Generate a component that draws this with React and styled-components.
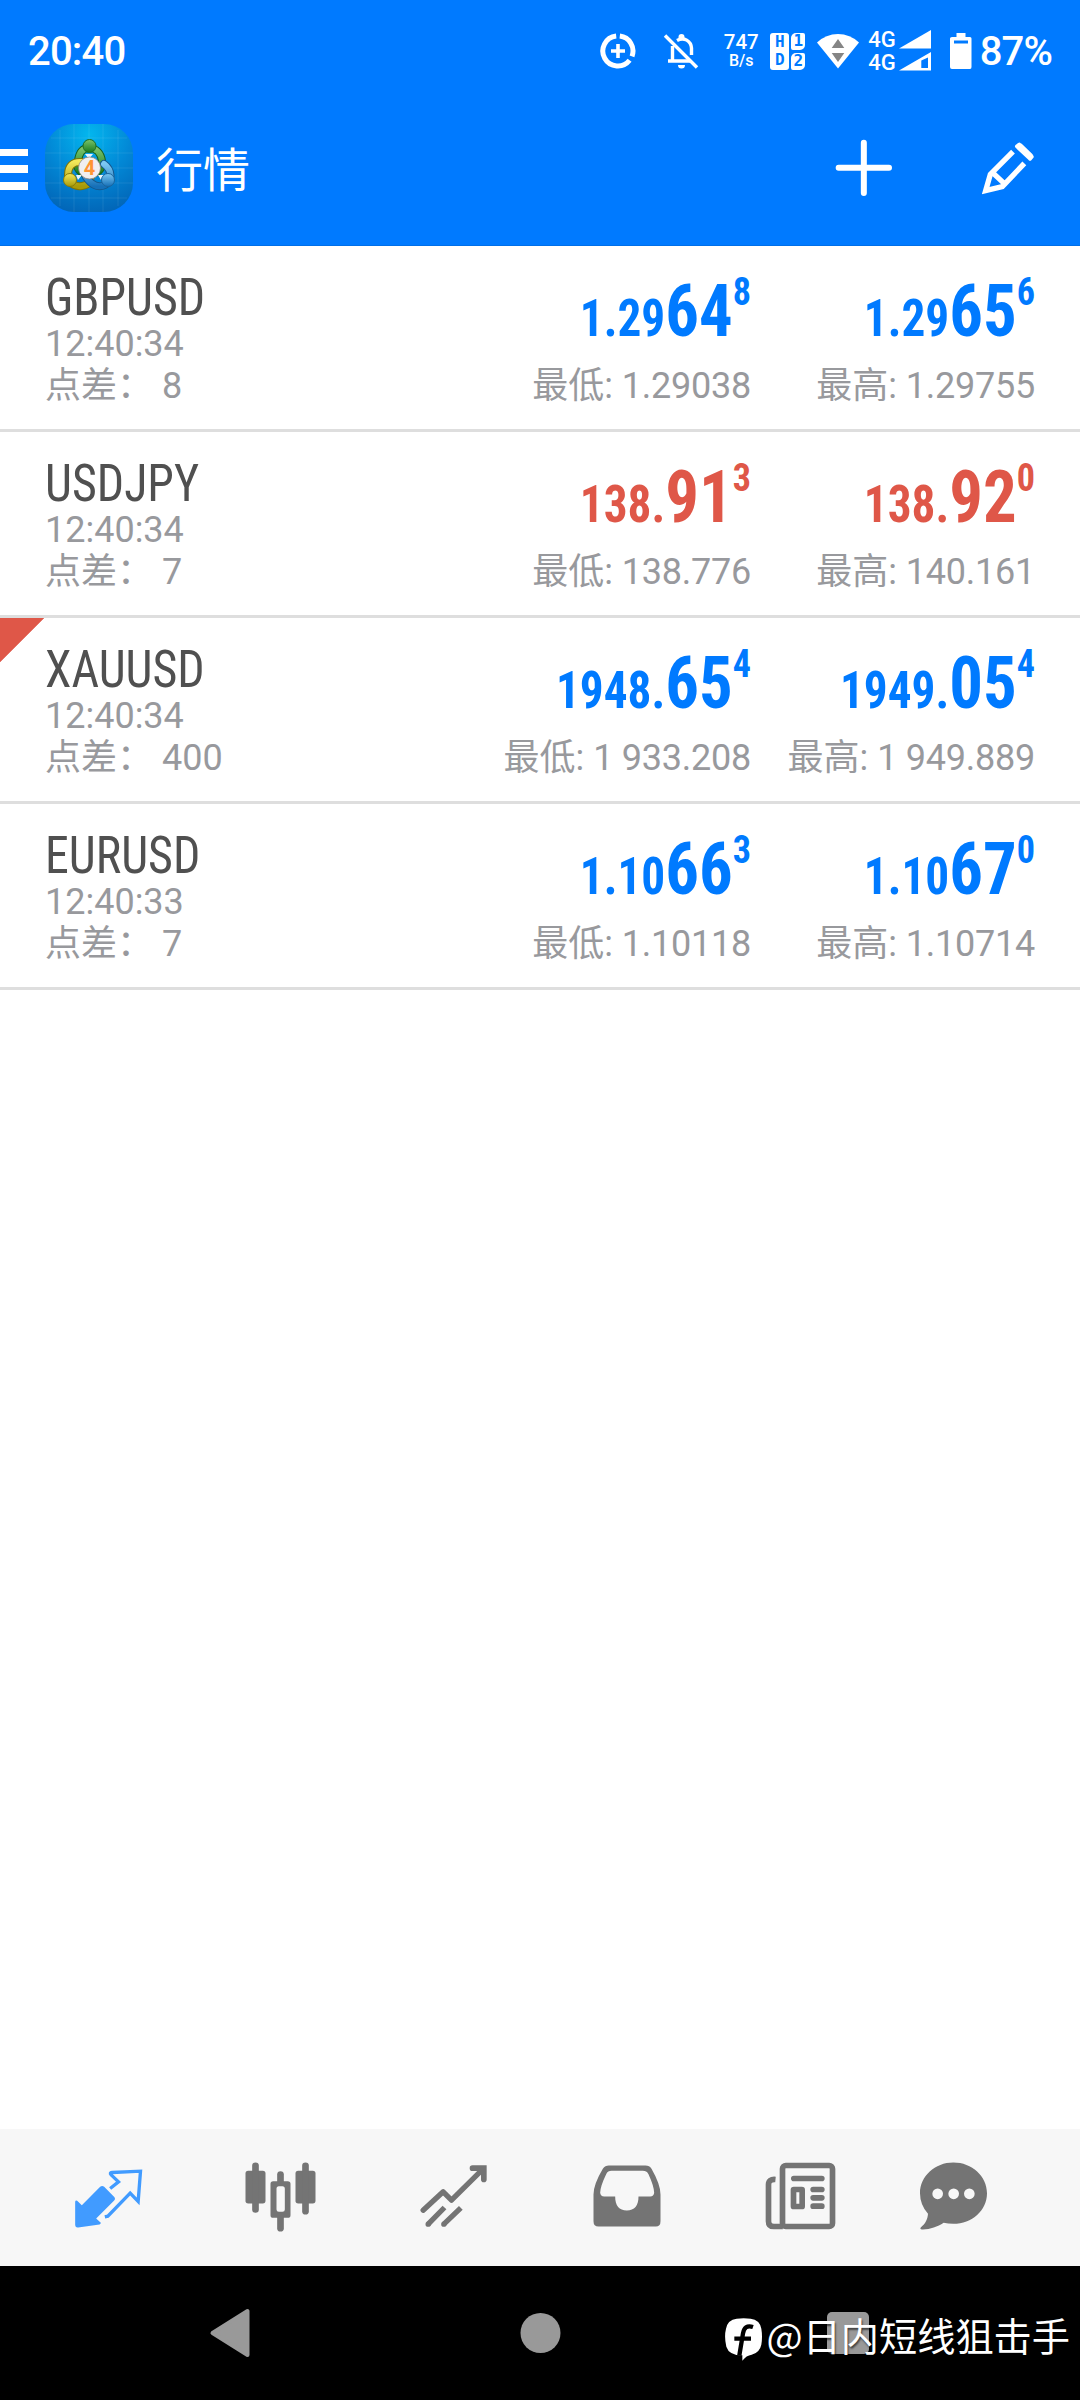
import React from 'react';
import styled, { createGlobalStyle } from 'styled-components'

const GlobalStyle = createGlobalStyle`
    * {
        box-sizing: border-box;
    }

    body {
        margin: 0;
        background: #fff;
        font-family: Roboto, "Noto Sans CJK SC", sans-serif;
    }
`

const BLUE = '#007aff'
const RED = '#df5748'

const Screen = styled.div`
    width: 1080px;
    height: 2400px;
    display: flex;
    flex-direction: column;
    position: relative;
    overflow: hidden;
    background: #fff;
`

/* status bar */

const StatusBar = styled.div`
    height: 100px;
    padding: 2px 28px 0 28px;
    display: flex;
    align-items: center;
    color: #fff;
    background: ${BLUE};
    font-weight: 500;
    white-space: nowrap;

    svg {
        display: block;
        flex: none;
    }
`

const Clock = styled.span`
    margin-right: auto;
    padding-top: 2px;
    font-size: 40px;
    line-height: 48px;
    letter-spacing: -.8px;
`

const NetSpeed = styled.div`
    width: 36px;
    margin: 0 11px 0 24px;
    display: flex;
    flex-direction: column;
    align-items: center;
    font-size: 20.5px;
    line-height: 18px;

    small {
        font-size: 16px;
        line-height: 19px;
    }
`

const VolteBadge = styled.div`
    width: 35px;
    height: 37px;
    margin-right: 12px;
    display: grid;
    grid-template-columns: 19px 14px;
    grid-template-rows: 17px 17px;
    gap: 3px 2px;
`

const VolteTile = styled.span`
    display: flex;
    align-items: center;
    justify-content: center;
    grid-row: ${props => props.$tall ? 'span 2' : 'auto'};
    flex-direction: column;
    border-radius: ${props => props.$tall ? '3px' : '5px 2px 5px 2px'};
    background: #fff;
    color: ${BLUE};
    font: bold 16px/18px "DejaVu Sans Mono", monospace;
`

const NetType = styled.div`
    display: flex;
    flex-direction: column;
    margin: 0 3px 0 9px;
    font-size: 22px;
    line-height: 23px;
`

const Battery = styled.span`
    margin-left: 8px;
    padding-top: 2px;
    font-size: 40px;
    line-height: 48px;
    letter-spacing: -.9px;
`

/* app bar */

const AppBar = styled.header`
    height: 146px;
    padding: 0 43px 9px 0;
    display: flex;
    align-items: center;
    background: ${BLUE};
    border-bottom: 1px solid #006fe8;
`

const MenuButton = styled.div`
    width: 28px;
    height: 41px;
    margin: 2px 17px 0 0;
    display: flex;
    flex-direction: column;
    justify-content: space-between;

    i {
        height: 7.5px;
        background: #fff;
    }
`

const Title = styled.h1`
    margin: 0 auto 0 23px;
    padding-top: 5px;
    color: #fff;
    font-size: 47px;
    font-weight: 400;
    line-height: 60px;
`

const Action = styled.svg`
    width: 58px;
    height: 58px;
    display: block;

    & + & {
        margin-left: 86px;
    }
`

/* quotes */

const List = styled.main`
    flex: 1;
`

const Row = styled.section`
    height: 186px;
    padding: 27px 45px 0;
    display: grid;
    grid-template-columns: 1fr 284px 284px;
    border-bottom: 3px solid #dedede;
    background: ${props => props.$flagged ? `linear-gradient(135deg, ${RED} 31px, transparent 31.5px)` : 'none'};
`

const Symbol = styled.div`
    color: #505050;
    font-size: 51px;
    font-weight: 450;
    line-height: 50px;
    font-family: "Roboto Condensed", Roboto, sans-serif;
    font-stretch: 75%;
    transform: scaleX(.94);
    transform-origin: left;
`

const Info = styled.div`
    color: #98999d;
    font-size: 36px;
    line-height: 42px;
    white-space: pre;
`

const Quote = styled.div`
    text-align: right;
    white-space: nowrap;
`

const Value = styled.span`
    letter-spacing: -.25px;
`

const Price = styled.div`
    height: 92px;
    color: ${props => props.$down ? RED : BLUE};
    font-family: "Roboto Condensed", Roboto, sans-serif;
    font-stretch: 75%;
    font-weight: 730;
    font-size: 72px;
    line-height: 77px;
    transform: scaleX(.927);
    transform-origin: right;
`

const Small = styled.span`
    font-size: 51px;
    line-height: 0;
`

const Pip = styled.span`
    font-size: 39px;
    line-height: 0;
    vertical-align: 31px;
`

/* bottom */

const TabBar = styled.nav`
    height: 137px;
    padding-left: 22.5px;
    display: grid;
    grid-template-columns: repeat(5, 173px) 132px;
    align-items: center;
    justify-items: center;
    background: #f7f7f7;
`

const TabIcon = styled.svg`
    width: 74px;
    height: 74px;
    color: ${props => props.$active ? '#419bff' : '#747474'};
`

const SystemNav = styled.footer`
    height: 134px;
    padding: 0 211px 1px 209px;
    display: flex;
    align-items: center;
    justify-content: space-between;
    background: #000;
`

// signature that floats over the navigation buttons
const Signature = styled.div`
    position: absolute;
    right: 10px;
    bottom: 35px;
    display: flex;
    align-items: center;
    color: #fff;
    font: 400 38.2px/60px "Noto Sans CJK SC", sans-serif;
    text-shadow: 1px 2px 2px rgba(0, 0, 0, .6);

    svg {
        margin: 8px 5px 0 0;
    }
`

const AppLogo = () => (
    <svg width="88" height="88" viewBox="0 0 88 88">
        <defs>
            <radialGradient id="bg" cx=".5" cy=".12" r=".95">
                <stop offset="0" stopColor="#03b6ee" />
                <stop offset=".5" stopColor="#0288d6" />
                <stop offset="1" stopColor="#0262b4" />
            </radialGradient>
            <linearGradient id="green" x2="0" y2="1">
                <stop offset="0" stopColor="#7cc46c" />
                <stop offset="1" stopColor="#177a1c" />
            </linearGradient>
            <linearGradient id="yellow" x2="0" y2="1">
                <stop offset="0" stopColor="#f3e85a" />
                <stop offset="1" stopColor="#a89a08" />
            </linearGradient>
            <linearGradient id="sky" x2="0" y2="1">
                <stop offset="0" stopColor="#7cc8f2" />
                <stop offset="1" stopColor="#1670b8" />
            </linearGradient>
        </defs>
        <rect width="88" height="88" rx="29" fill="url(#bg)" />
        <path d="M15 6V82M29 0V88M44 0V88M58 0V88M73 6V82M6 14H82M0 29H88M0 44H88M0 59H88M6 74H82" stroke="#fff" strokeOpacity=".09" />
        <g fill="none" strokeLinecap="round">
            <path d="M33 37C30 45 36 50 44 50S58 46 57 37C56 29 51 24 44 24S34 29 33 37Z" stroke="#17601d" strokeWidth="8" />
            <path d="M33 37C30 45 36 50 44 50S58 46 57 37C56 29 51 24 44 24S34 29 33 37Z" stroke="url(#green)" strokeWidth="6" />
            <path d="M37 38C27 37 23 43 23 51S29 63 37 62S47 56 44 48" stroke="#7d7409" strokeWidth="8" />
            <path d="M37 38C27 37 23 43 23 51S29 63 37 62S47 56 44 48" stroke="url(#yellow)" strokeWidth="6" />
            <path d="M59 40C67 46 68 57 60 61S45 59 41 53" stroke="#14588e" strokeWidth="8" />
            <path d="M59 40C67 46 68 57 60 61S45 59 41 53" stroke="url(#sky)" strokeWidth="6" />
        </g>
        <path d="M31 51H37L33 56ZM53 51H59L56 56ZM40 30H48L44 35Z" fill="#e9f5ff" />
        <circle cx="44.5" cy="22" r="6.5" fill="url(#green)" stroke="#1c6c22" />
        <circle cx="25" cy="56" r="6.5" fill="url(#yellow)" stroke="#857b0b" />
        <circle cx="63" cy="56" r="6.5" fill="url(#sky)" stroke="#1a649c" />
        <circle cx="44.5" cy="44" r="11" fill="#f0eff1" stroke="#837c72" strokeWidth=".7" />
        <text x="44.5" y="51" textAnchor="middle" fontFamily="Roboto, sans-serif" fontWeight="700" fontSize="20" fill="#ff9433">4</text>
    </svg>
)

const quotes = [
    { symbol: 'GBPUSD', time: '12:40:34', spread: '8', bid: ['1.29', '64', '8'], ask: ['1.29', '65', '6'], low: '1.29038', high: '1.29755' },
    { symbol: 'USDJPY', time: '12:40:34', spread: '7', bid: ['138.', '91', '3'], ask: ['138.', '92', '0'], low: '138.776', high: '140.161', down: true },
    { symbol: 'XAUUSD', time: '12:40:34', spread: '400', bid: ['1948.', '65', '4'], ask: ['1949.', '05', '4'], low: '1 933.208', high: '1 949.889', flagged: true },
    { symbol: 'EURUSD', time: '12:40:33', spread: '7', bid: ['1.10', '66', '3'], ask: ['1.10', '67', '0'], low: '1.10118', high: '1.10714' },
]

const QuoteCell = ({ price, down, label, value }) => (
    <Quote>
        <Price $down={down}>
            <Small>{price[0]}</Small>{price[1]}<Pip>{price[2]}</Pip>
        </Price>
        <Info>{label}: <Value>{value}</Value></Info>
    </Quote>
)

const QuoteRow = ({ quote }) => (
    <Row $flagged={quote.flagged}>
        <div>
            <Symbol>{quote.symbol}</Symbol>
            <Info>{quote.time}</Info>
            <Info>点差： {quote.spread}</Info>
        </div>
        <QuoteCell price={quote.bid} down={quote.down} label="最低" value={quote.low} />
        <QuoteCell price={quote.ask} down={quote.down} label="最高" value={quote.high} />
    </Row>
)

const BellOff = styled.svg`
    margin-left: 27px;
`

const BatteryIcon = styled.svg`
    margin-left: 18px;
`

const Status = () => (
    <StatusBar>
        <Clock>20:40</Clock>
        {/* data saver */}
        <svg width="36" height="36" viewBox="0 0 36 36" fill="none" stroke="#fff">
            <path d="M19.8 3.1A15 15 0 0 1 32 23.3M29.6 27.3A15 15 0 1 1 16.2 3.1" strokeWidth="5" />
            <path d="M18 11V25M11 18H25" strokeWidth="3.6" />
        </svg>
        {/* muted bell */}
        <BellOff width="36" height="36" viewBox="0 0 36 36" fill="none" stroke="#fff">
            <path d="M2 2.5L34 34.5" strokeWidth="3.4" />
            <path d="M9.5 13V28M5 28H27" strokeWidth="3.4" />
            <path d="M14 7.5C21 3.5 28 8 28.5 15V22" strokeWidth="3.4" />
            <path d="M15.5 6V4A3 3 0 0 1 21.5 4V6ZM15 32H22A3.5 3.5 0 0 1 15 32Z" fill="#fff" stroke="none" />
        </BellOff>
        <NetSpeed>747<small>B/s</small></NetSpeed>
        <VolteBadge>
            <VolteTile $tall><span>H</span><span>D</span></VolteTile>
            <VolteTile>1</VolteTile>
            <VolteTile>2</VolteTile>
        </VolteBadge>
        {/* wifi with traffic arrows */}
        <svg width="42" height="36" viewBox="0 0 42 36">
            <path d="M0 9.5Q9 1 21 1T42 9.5L21 35.5Z" fill="#fff" />
            <path d="M21 6L27.3 15H14.7ZM21 29L27.3 20H14.7Z" fill="#858585" />
        </svg>
        <NetType><span>4G</span><span>4G</span></NetType>
        <svg width="33" height="42" viewBox="0 0 33 42">
            <path d="M0 18.5L32 0V18.5Z" fill="#fff" />
            <path d="M0 40.5L32 22V40.5ZM22.3 30.5V38H29V27.5Z" fill="#fff" fillRule="evenodd" />
        </svg>
        <BatteryIcon width="22" height="36" viewBox="0 0 22 36">
            <path d="M6.5 0H15.5V4H20Q21.5 4 21.5 5.5V34Q21.5 36 20 36H2Q0 36 0 34V5.5Q0 4 2 4H6.5ZM4 7.5V10.5H18V7.5Z" fill="#fff" fillRule="evenodd" />
        </BatteryIcon>
        <Battery>87%</Battery>
    </StatusBar>
)

const Tabs = () => (
    <TabBar>
        <TabIcon $active viewBox="217.5 121.5 222 222">
            <path d="M302 199Q308 194 314 199L345 230Q349 235 344 240L290 294L304 307Q304 311 300 312L236 321Q227 322 227 312V244Q228 238 233 241L247 254Z" fill="currentColor" />
            <path d="M332 204L357 184L335 163Q329 157 338 156L423 152L416 243L392 218L325 287L316 289" fill="none" stroke="currentColor" strokeWidth="10" />
        </TabIcon>
        <TabIcon viewBox="736.5 121.5 222 222" fill="currentColor">
            <rect x="738" y="151" width="60" height="98" rx="8" />
            <rect x="758" y="126" width="20" height="151" rx="10" />
            <rect x="888" y="151" width="60" height="98" rx="8" />
            <rect x="908" y="126" width="20" height="156" rx="10" />
            <rect x="833" y="152" width="20" height="40" rx="10" />
            <rect x="833" y="280" width="20" height="53" rx="10" />
            <path d="M821 182H865Q873 182 873 190V284Q873 292 865 292H821Q813 292 813 284V190Q813 182 821 182ZM838 197Q831 197 831 205V267Q831 274 838 274H849Q856 274 856 267V205Q856 197 849 197Z" fillRule="evenodd" />
        </TabIcon>
        <TabIcon viewBox="175.5 121.5 222 222" fill="none" stroke="currentColor" strokeWidth="16">
            <path d="M191 269L251 214L276 239L370 146" strokeLinecap="round" strokeLinejoin="round" />
            <path d="M339 143H373V177" strokeLinecap="round" strokeWidth="17" />
            <path d="M206 311L255 261M253 311L304 262" />
            <path d="M206 311H206.1M253 311H253.1" strokeLinecap="round" />
        </TabIcon>
        <TabIcon viewBox="694.5 121.5 222 222">
            <path d="M748 135H858Q870 135 876 145Q903 192 903 222V302Q903 318 889 318H717Q702 318 702 302V222Q702 192 730 145Q737 135 748 135ZM756 151Q745 151 740 161Q722 198 722 217Q723 228 734 228H767C767 255 779 270 802 270S837 255 837 228H872Q883 228 884 217Q884 198 867 161Q861 151 850 151Z" fill="currentColor" fillRule="evenodd" />
        </TabIcon>
        <TabIcon viewBox="133.5 121.5 222 222" fill="none" stroke="currentColor" strokeWidth="17">
            <rect x="189" y="135" width="150" height="183" rx="10" />
            <path d="M168 177Q147 175 147 193V302Q147 318 163 318H190" />
            <path d="M223 174H307M281 207H307M281 232H307M281 257H307" strokeLinecap="round" />
            <rect x="222" y="207" width="26" height="51" rx="1" />
        </TabIcon>
        <TabIcon viewBox="591 121.5 222 222">
            <path d="M700 126C756 126 801 167 801 218S756 310 700 310Q684 310 671 307C652 319 628 328 606 327Q598 325 603 320C616 311 623 296 624 280Q600 252 600 218C600 167 645 126 700 126Z" fill="currentColor" />
            <g fill="#f7f7f7">
                <circle cx="653" cy="220" r="16" />
                <circle cx="701" cy="220" r="16" />
                <circle cx="748" cy="220" r="16" />
            </g>
        </TabIcon>
    </TabBar>
)

const App = () => {
    return (
        <Screen>
            <GlobalStyle />
            <Status />
            <AppBar>
                <MenuButton><i /><i /><i /></MenuButton>
                <AppLogo />
                <Title>行情</Title>
                <Action viewBox="104 86 174 174" fill="none" stroke="#fff" strokeWidth="18" strokeLinecap="round">
                    <path d="M190.5 97V248M115 172.5H266" />
                </Action>
                <Action viewBox="535 86 174 174" fill="none" stroke="#fff" strokeWidth="16">
                    <path d="M637 124L569 192L555 241L605 229L671 159M575 186L611 220" />
                    <path d="M656 106L690 139" strokeWidth="18" />
                    <path d="M656 103L693 139L688 145L649 108Z" strokeWidth="12" strokeLinejoin="round" />
                </Action>
            </AppBar>

            <List>
                {quotes.map(quote => <QuoteRow key={quote.symbol} quote={quote} />)}
            </List>

            <Tabs />

            <SystemNav>
                <svg width="43" height="50" viewBox="0 0 42 50">
                    <path d="M38 3V47L3 25Z" fill="#999" stroke="#999" strokeWidth="4" strokeLinejoin="round" />
                </svg>
                <svg width="42" height="42">
                    <circle cx="21.5" cy="21" r="20" fill="#999" />
                </svg>
                <svg width="42" height="42">
                    <rect width="42" height="42" rx="5" fill="#999" />
                </svg>
            </SystemNav>

            <Signature>
                <svg width="37" height="43" viewBox="0 0 111 129">
                    <path d="M35 2Q56 -1 77 2Q104 5 109 32Q113 56 109 80Q104 104 80 110Q64 112 52 128V112Q12 112 4 86Q-3 56 3 32Q8 5 35 2Z" fill="#fff" />
                    <path d="M84 27C66 21 57 29 54 46L43 112M28 62H78" fill="none" stroke="#000" strokeWidth="13" />
                </svg>
                @日内短线狙击手
            </Signature>
        </Screen>
    );
}

export default App;
